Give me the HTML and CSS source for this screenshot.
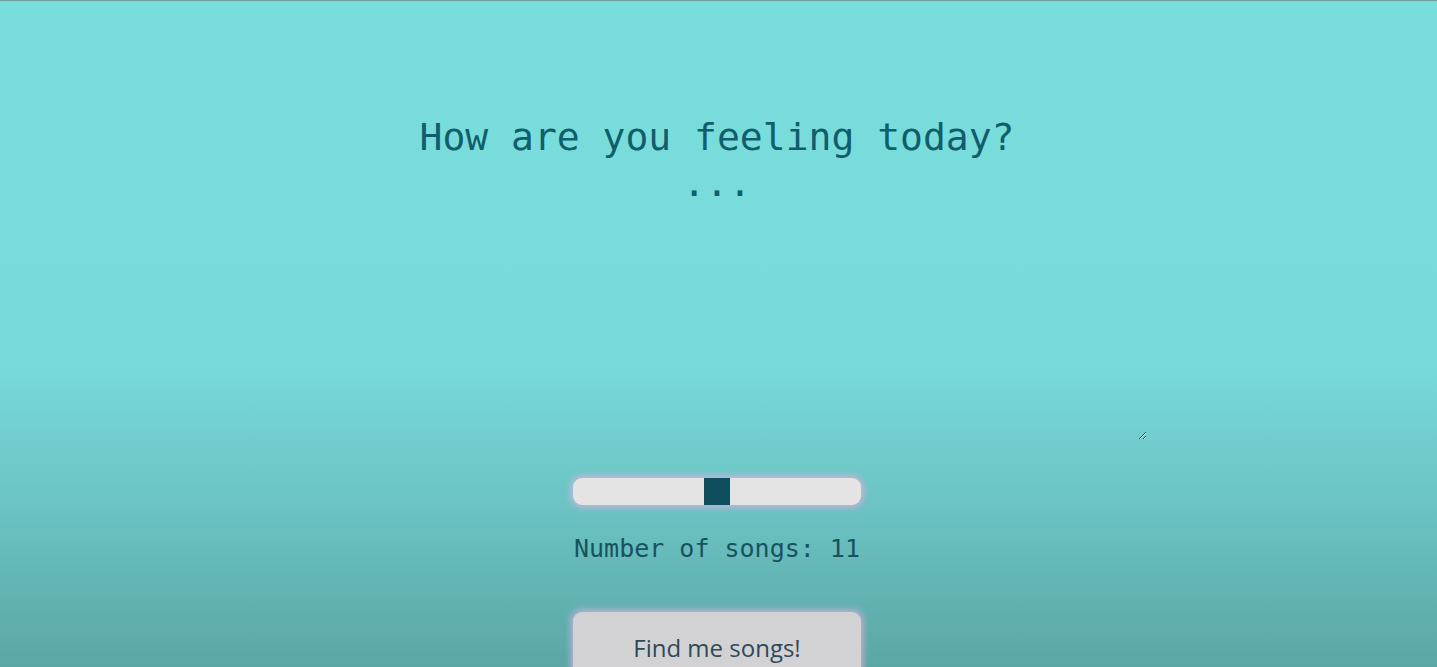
FILE: index.html
```html
<!DOCTYPE html>
<html lang="en">
<head>
<meta charset="utf-8">
<title>Mood songs</title>
<link rel="stylesheet" href="styles.css">
</head>
<body>
<main class="page">
  <textarea class="mood" spellcheck="false">How are you feeling today?
...</textarea>
  <input class="slider" type="range" min="1" max="21" value="11">
  <p class="count">Number of songs: 11</p>
  <button class="find" type="button">Find me songs!</button>
</main>
</body>
</html>
```

FILE: styles.css
```css
html, body {
  margin: 0;
  padding: 0;
  height: 100%;
  overflow: hidden;
}

body {
  background: linear-gradient(to bottom, #79dddc 0px, #78dbda 360px, #6cc4c4 500px, #5ba6a6 667px);
  border-top: 1px solid #6e9e9c;
  box-sizing: border-box;
}

.page {
  display: flex;
  flex-direction: column;
  align-items: center;
  padding-top: 99px;
  padding-right: 3px;
}

.mood {
  width: 860px;
  height: 340px;
  box-sizing: border-box;
  padding: 14px 10px;
  border: none;
  outline: none;
  background: transparent;
  resize: both;
  text-align: center;
  font-family: "DejaVu Sans Mono", "Liberation Mono", monospace;
  font-size: 38px;
  line-height: 46px;
  color: #105d6c;
  overflow: hidden;
}

.slider {
  -webkit-appearance: none;
  appearance: none;
  margin: 38px 0 0 0;
  width: 288px;
  height: 27px;
  background: #e4e4e4;
  border-radius: 9px;
  box-shadow: 0 0 7px 2px rgba(230, 176, 228, 0.8);
  outline: none;
}

.slider::-webkit-slider-thumb {
  -webkit-appearance: none;
  appearance: none;
  width: 26px;
  height: 27px;
  background: #0d4d5e;
  border: none;
  border-radius: 0;
  cursor: pointer;
}

.count {
  margin: 29px 0 0 0;
  font-family: "DejaVu Sans Mono", "Liberation Mono", monospace;
  font-size: 25px;
  line-height: 30px;
  color: #17535f;
}

.find {
  margin-top: 48px;
  width: 288px;
  height: 70px;
  border: none;
  border-radius: 9px;
  background: #d2d2d5;
  box-shadow: 0 0 7px 2px rgba(226, 176, 228, 0.8);
  font-family: "Open Sans", "DejaVu Sans", sans-serif;
  font-size: 24px;
  color: #2d4a55;
  cursor: pointer;
}
```
